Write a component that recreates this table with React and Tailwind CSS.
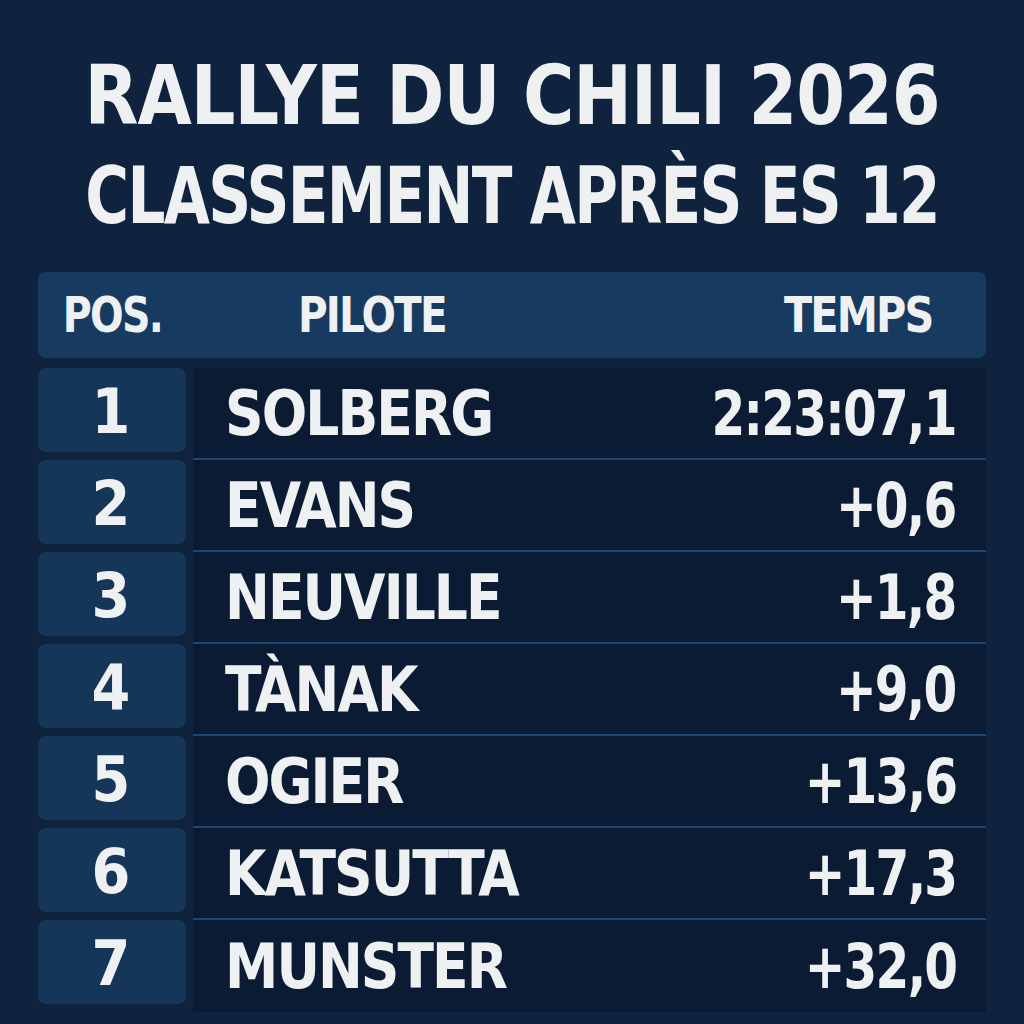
import React from "react";

const rows = [
  { pos: 1, name: "SOLBERG", time: "2:23:07,1" },
  { pos: 2, name: "EVANS", time: "+0,6" },
  { pos: 3, name: "NEUVILLE", time: "+1,8" },
  { pos: 4, name: "TÀNAK", time: "+9,0" },
  { pos: 5, name: "OGIER", time: "+13,6" },
  { pos: 6, name: "KATSUTTA", time: "+17,3" },
  { pos: 7, name: "MUNSTER", time: "+32,0" },
];

const font = { fontFamily: '"DejaVu Sans Condensed", "DejaVu Sans", sans-serif' };

export default function App() {
  return (
    <div
      className="w-[1024px] h-[1024px] bg-[#0f223e] text-[#eef0f2] font-bold flex flex-col pt-[46px] overflow-hidden"
      style={font}
    >
      <div className="flex flex-col items-center leading-[100px]">
        <div className="text-[82px] tracking-[-1px] scale-x-[0.95]">RALLYE DU CHILI 2026</div>
        <div className="text-[78px] tracking-[-2px] scale-x-[0.85]">CLASSEMENT APRÈS ES 12</div>
      </div>

      <div className="mx-[38px] mt-[26px] flex flex-col">
        <div className="h-[86px] bg-[#173b60] rounded-[8px] flex items-center text-[50px] tracking-[-2px]">
          <div className="w-[148px] flex justify-center">
            <span className="inline-block scale-x-[0.88]">POS.</span>
          </div>
          <span className="ml-[112px] inline-block scale-x-[0.9] origin-left">PILOTE</span>
          <div className="flex-1 flex justify-end pr-[53px]">
            <span className="inline-block scale-x-[0.92] origin-right">TEMPS</span>
          </div>
        </div>

        <div className="mt-[10px] flex flex-col">
          {rows.map((r, i) => (
            <div key={r.pos} className="h-[92px] flex items-start gap-[7px]">
              <div className="w-[148px] h-[84px] bg-[#163659] rounded-[8px] flex items-center justify-center text-[62px] pr-[2px] pt-[2px]">
                {r.pos}
              </div>
              <div
                className={
                  "flex-1 h-full bg-[#0b1b33] flex items-center justify-between pl-[32px] pr-[30px] text-[62px] tracking-[-2px] " +
                  (i < rows.length - 1 ? "border-b-2 border-[#1e4670]" : "")
                }
              >
                <span className="inline-block scale-x-[0.96] origin-left">{r.name}</span>
                <span className="inline-block scale-x-[0.87] origin-right">{r.time}</span>
              </div>
            </div>
          ))}
        </div>
      </div>
    </div>
  );
}
